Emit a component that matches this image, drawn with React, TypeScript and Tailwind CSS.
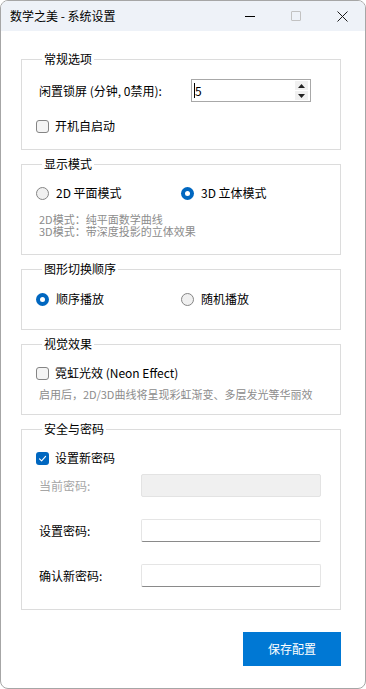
import { useState } from 'react';

const font = { fontFamily: '"Noto Sans CJK SC", "Noto Sans", sans-serif' };

function CheckBox({ checked, label }: { checked: boolean; label: string }) {
  return (
    <div className="flex h-[16px] items-center">
      {checked ? (
        <span className="flex h-[13px] w-[13px] items-center justify-center rounded-[3px] bg-[#0067c0]">
          <svg width="9" height="9" viewBox="0 0 9 9" fill="none">
            <path d="M1.5 4.8 L3.6 6.8 L7.6 2.3" stroke="#ffffff" strokeWidth="1.1" strokeLinecap="round" strokeLinejoin="round" />
          </svg>
        </span>
      ) : (
        <span className="h-[13px] w-[13px] rounded-[3px] border border-[#858585] bg-[#f4f4f4]" />
      )}
      <span className="ml-[6px] text-[12px] leading-[16px] text-black">{label}</span>
    </div>
  );
}

function Radio({ checked, label }: { checked: boolean; label: string }) {
  return (
    <div className="flex h-[16px] items-center">
      {checked ? (
        <span className="flex h-[13px] w-[13px] items-center justify-center rounded-full bg-[#0067c0]">
          <span className="h-[5px] w-[5px] rounded-full bg-white" />
        </span>
      ) : (
        <span className="h-[13px] w-[13px] rounded-full border border-[#858585] bg-[#f0f0f0]" />
      )}
      <span className="ml-[7px] text-[12px] leading-[16px] text-black">{label}</span>
    </div>
  );
}

function Group({ title, className, children }: { title: string; className: string; children: React.ReactNode }) {
  return (
    <fieldset className={`w-[320px] border border-[#dcdcdc] pl-[14px] ${className}`}>
      <legend className="ml-[6px] px-[2px] text-[12px] leading-[16px] text-black">{title}</legend>
      {children}
    </fieldset>
  );
}

function PasswordRow({ label, disabled }: { label: string; disabled?: boolean }) {
  return (
    <div className="flex h-[23px] items-center">
      <span className={`ml-[3px] w-[102px] text-[12px] leading-[16px] ${disabled ? 'text-[#a6a6a6]' : 'text-black'}`}>
        {label}
      </span>
      {disabled ? (
        <div className="h-[23px] w-[180px] rounded-[2px] border border-[#e3e3e3] bg-[#f0f0f0]" />
      ) : (
        <div className="h-[23px] w-[180px] rounded-[2px] border border-[#e5e5e5] border-b-[#8a8a8a] bg-white" />
      )}
    </div>
  );
}

export default function App() {
  const [minutes] = useState(5);

  return (
    <div className="h-[689px] w-[366px] bg-white" style={font}>
      <div className="flex h-full flex-col overflow-hidden rounded-[8px] border border-[#a6a6a6] bg-white">
        {/* title bar */}
        <div className="flex h-[30px] shrink-0 items-center bg-[#eef2f8]">
          <span className="pl-[9px] text-[12px] leading-[16px] text-black">数学之美 - 系统设置</span>
          <div className="ml-auto flex h-full">
            <div className="flex h-full w-[46px] items-center justify-center">
              <span className="h-px w-[10px] bg-black" />
            </div>
            <div className="flex h-full w-[46px] items-center justify-center">
              <span className="h-[10px] w-[10px] rounded-[1px] border border-[#c2c2c2]" />
            </div>
            <div className="flex h-full w-[46px] items-center justify-center">
              <svg width="11" height="11" viewBox="0 0 11 11">
                <path d="M0.5 0.5 L10.5 10.5 M10.5 0.5 L0.5 10.5" stroke="#1a1a1a" strokeWidth="1" />
              </svg>
            </div>
          </div>
        </div>

        {/* body */}
        <div className="flex flex-col gap-[6px] pl-[20px] pt-[20px]">
          <Group title="常规选项" className="pb-[15px]">
            <div className="mt-[12px] flex h-[23px] items-center">
              <span className="ml-[3px] w-[152px] text-[12px] leading-[16px] text-black">闲置锁屏 (分钟, 0禁用):</span>
              <div className="flex h-[23px] w-[120px] items-center border border-[#a8a8a8] bg-white">
                <span className="ml-[2px] h-[15px] w-px bg-black" />
                <span className="flex-1 text-[12px] leading-[16px] text-black">{minutes}</span>
                <div className="mr-[2px] flex flex-col gap-[1px]">
                  <span className="flex h-[9px] w-[13px] items-center justify-center bg-[#f0f0f0]">
                    <svg width="7" height="4" viewBox="0 0 7 4"><path d="M0 4 L3.5 0 L7 4 Z" fill="#222" /></svg>
                  </span>
                  <span className="flex h-[9px] w-[13px] items-center justify-center bg-[#f0f0f0]">
                    <svg width="7" height="4" viewBox="0 0 7 4"><path d="M0 0 L3.5 4 L7 0 Z" fill="#222" /></svg>
                  </span>
                </div>
              </div>
            </div>
            <div className="mt-[16px]">
              <CheckBox checked={false} label="开机自启动" />
            </div>
          </Group>

          <Group title="显示模式" className="pb-[17px]">
            <div className="mt-[13px] flex">
              <div className="w-[145px]">
                <Radio checked={false} label="2D 平面模式" />
              </div>
              <Radio checked label="3D 立体模式" />
            </div>
            <div className="ml-[3px] mt-[12px] text-[11px] leading-[12px] text-[#8c8c8c]">
              <p>2D模式：纯平面数学曲线</p>
              <p>3D模式：带深度投影的立体效果</p>
            </div>
          </Group>

          <Group title="图形切换顺序" className="pb-[22px]">
            <div className="mt-[14px] flex">
              <div className="w-[145px]">
                <Radio checked label="顺序播放" />
              </div>
              <Radio checked={false} label="随机播放" />
            </div>
          </Group>

          <Group title="视觉效果" className="pb-[14px]">
            <div className="mt-[13px]">
              <CheckBox checked={false} label="霓虹光效 (Neon Effect)" />
            </div>
            <p className="ml-[3px] mt-[7px] text-[11px] leading-[12px] text-[#8c8c8c]">
              启用后，2D/3D曲线将呈现彩虹渐变、多层发光等华丽效
            </p>
          </Group>

          <Group title="安全与密码" className="pb-[22px]">
            <div className="mt-[13px]">
              <CheckBox checked label="设置新密码" />
            </div>
            <div className="mt-[8px] flex flex-col gap-[22px]">
              <PasswordRow label="当前密码:" disabled />
              <PasswordRow label="设置密码:" />
              <PasswordRow label="确认新密码:" />
            </div>
          </Group>

          <div className="mt-[16px] flex w-[320px] justify-end">
            <button className="h-[34px] w-[98px] bg-[#0078d4] text-[12px] leading-[16px] text-white">保存配置</button>
          </div>
        </div>
      </div>
    </div>
  );
}
